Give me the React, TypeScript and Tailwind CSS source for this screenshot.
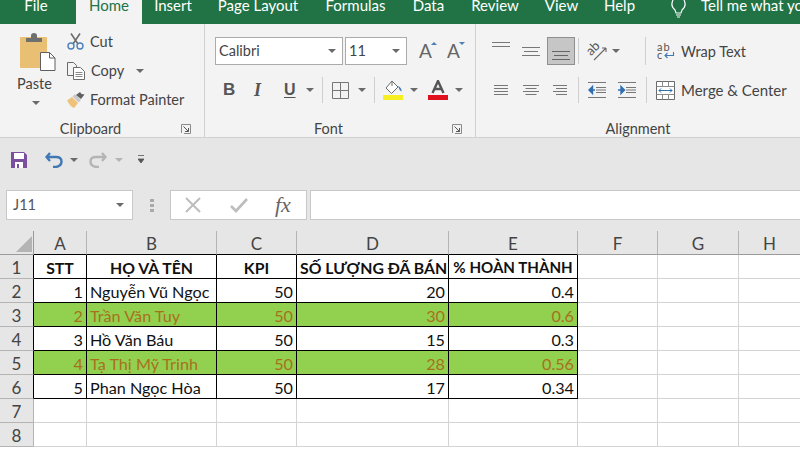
import React from 'react';

const tabs = [
  { name: 'File', w: 72 },
  { name: 'Home', w: 66 },
  { name: 'Insert', w: 62 },
  { name: 'Page Layout', w: 108 },
  { name: 'Formulas', w: 87 },
  { name: 'Data', w: 59 },
  { name: 'Review', w: 74 },
  { name: 'View', w: 59 },
  { name: 'Help', w: 57 },
];

const columns = ['A', 'B', 'C', 'D', 'E', 'F', 'G', 'H'];

// row data, hl = green highlighted row
const rows = [
  { cells: ['STT', 'HỌ VÀ TÊN', 'KPI', 'SỐ LƯỢNG ĐÃ BÁN', '% HOÀN THÀNH'], head: true },
  { cells: ['1', 'Nguyễn Vũ Ngọc', '50', '20', '0.4'] },
  { cells: ['2', 'Trần Văn Tuy', '50', '30', '0.6'], hl: true },
  { cells: ['3', 'Hồ Văn Báu', '50', '15', '0.3'] },
  { cells: ['4', 'Tạ Thị Mỹ Trinh', '50', '28', '0.56'], hl: true },
  { cells: ['5', 'Phan Ngọc Hòa', '50', '17', '0.34'] },
];

function Caret({ className = '' }: { className?: string }) {
  return (
    <svg width="8" height="4" viewBox="0 0 8 4" className={className}>
      <path d="M0 0h8L4 4z" fill="#6a6a6a" />
    </svg>
  );
}

function Sep({ className = '' }: { className?: string }) {
  return <div className={`w-px h-[26px] bg-[#cfcfcf] ${className}`} />;
}

function Launcher() {
  return (
    <svg width="10" height="10" viewBox="0 0 10 10">
      <path d="M.5 9V.5H9.5V9.5H3" fill="none" stroke="#8a8a8a" />
      <path d="M2.5 2.5L7.5 7.5M7.5 4v3.5H4" fill="none" stroke="#555" />
    </svg>
  );
}

function GroupLabel({ text, launcher = true }: { text: string; launcher?: boolean }) {
  return (
    <div className="flex items-center h-[20px] mt-auto mb-[-2px]">
      <div className="flex-1 text-center text-[#444]">{text}</div>
      {launcher && (
        <div className="w-[23px] flex">
          <Launcher />
        </div>
      )}
    </div>
  );
}

function Lines({ widths, gap = 3, color = '#777', align = 'center' }: { widths: number[]; gap?: number; color?: string; align?: string }) {
  const w = Math.max(...widths);
  return (
    <svg width={w} height={(widths.length - 1) * gap + 1}>
      {widths.map((l, i) => {
        const x = align === 'left' ? 0 : align === 'right' ? w - l : (w - l) / 2;
        return <rect key={i} x={x} y={i * gap} width={l} height="1" fill={color} />;
      })}
    </svg>
  );
}

function PasteIcon() {
  return (
    <svg width="37" height="38" viewBox="0 0 37 38">
      <rect x="0" y="4" width="27" height="31" rx="1" fill="#e9bf73" />
      <path d="M6 9V5h5V2.5Q11 0 14 0t3 2.5V5h5v4z" fill="#6f6f6f" />
      <path d="M20.5 19.5h9l5.5 5.5v12.5h-14.5z" fill="#fff" stroke="#5f5f5f" />
      <path d="M29.5 19.5V25H35" fill="none" stroke="#5f5f5f" />
    </svg>
  );
}

function CutIcon() {
  return (
    <svg width="17" height="17" viewBox="0 0 17 17">
      <path d="M4 0.5L11 11M13 0.5L6 11" fill="none" stroke="#6d6d6d" strokeWidth="1.6" />
      <circle cx="4" cy="13" r="3" fill="none" stroke="#4d82b8" strokeWidth="1.4" />
      <circle cx="13" cy="13" r="3" fill="none" stroke="#4d82b8" strokeWidth="1.4" />
    </svg>
  );
}

function CopyIcon() {
  return (
    <svg width="18" height="18" viewBox="0 0 18 18">
      <path d="M.5.5h6l3 3v10H.5z" fill="#f3f3f3" stroke="#6a6a6a" />
      <path d="M6.5 5.5h7l4 4v8h-11z" fill="#fff" stroke="#6a6a6a" />
      <path d="M8.5 10.5h7M8.5 12.5h7M8.5 14.5h7" stroke="#8a8a8a" />
    </svg>
  );
}

function PainterIcon() {
  return (
    <svg width="18" height="16" viewBox="0 0 18 16">
      <path d="M0 8.5L5 5l6 6-4 5q-3-.5-7-7.5z" fill="#efc27a" />
      <path d="M5.5 4.5L8 2l6 6-2.5 2.5z" fill="#c9c9c9" />
      <path d="M9 3l4-3 1.5 2 3 .5-3.5 4.5z" fill="#606060" />
    </svg>
  );
}

function BorderIcon() {
  return (
    <svg width="17" height="17" viewBox="0 0 17 17">
      <path d="M.5.5h16v16H.5zM8.5.5v16M.5 8.5h16" fill="none" stroke="#777" />
    </svg>
  );
}

function FillIcon() {
  return (
    <svg width="20" height="20" viewBox="0 0 20 20">
      <path d="M9 1L3 8l5.5 5.5L15 7z" fill="#fff" stroke="#6a6a6a" />
      <path d="M9 1v5" stroke="#6a6a6a" />
      <path d="M15 6q4 2 3.5 5.5-2-1-2.5-3z" fill="#3f78b5" />
      <rect x="0" y="15" width="20" height="5" fill="#f6ef22" />
    </svg>
  );
}

function FontColorIcon() {
  return (
    <svg width="20" height="20" viewBox="0 0 20 20">
      <path d="M4.5 13L10 1l5.5 12M6.5 9h7" fill="none" stroke="#555" strokeWidth="2.4" />
      <rect x="0" y="15" width="20" height="5" fill="#e0101c" />
    </svg>
  );
}

function GrowIcon({ up }: { up: boolean }) {
  return (
    <span className="relative flex text-[19px] leading-5 text-[#666]">
      A
      <svg width="6" height="3" viewBox="0 0 6 3" className="absolute -right-[5px] top-[1px]">
        <path d={up ? 'M0 3h6L3 0z' : 'M0 0h6L3 3z'} fill="#4b7fb5" />
      </svg>
    </span>
  );
}

function OrientIcon() {
  return (
    <svg width="20" height="20" viewBox="0 0 20 20">
      <path d="M7 19L19 7M19 7h-4M19 7v4" fill="none" stroke="#666" strokeWidth="1.1" />
      <text x="0" y="12" transform="rotate(-45 6 9)" fontSize="13" fontFamily="Lato, sans-serif" fill="#555">ab</text>
    </svg>
  );
}

function WrapIcon() {
  return (
    <svg width="18" height="17" viewBox="0 0 18 17">
      <text x="0" y="7.5" fontSize="11" fontFamily="Lato, sans-serif" fill="#555" letterSpacing="1">ab</text>
      <text x="0" y="16" fontSize="11" fontFamily="Lato, sans-serif" fill="#555">c</text>
      <path d="M16.5 9v3.5H8M10.5 10l-2.500 2.500 2.500 2.500" fill="none" stroke="#3f78b5" strokeWidth="1.100" />
    </svg>
  );
}

function IndentIcon({ out }: { out: boolean }) {
  return (
    <svg width="18" height="16" viewBox="0 0 18 16">
      <path d="M0 .5h18M8 5.5h10M8 8h10M8 10.5h10M0 15.5h18" stroke="#777" />
      {out ? (
        <path d="M7 8H2M4.5 4.5L1 8l3.5 3.5z" fill="#2f6fb0" stroke="#2f6fb0" strokeWidth="1.4" />
      ) : (
        <path d="M0 8h5M3 4.5L6.5 8 3 11.5z" fill="#2f6fb0" stroke="#2f6fb0" strokeWidth="1.4" />
      )}
    </svg>
  );
}

function MergeIcon() {
  return (
    <svg width="19" height="19" viewBox="0 0 19 19">
      <path d="M.5.5h18v18H.5z" fill="#fff" stroke="#6a6a6a" />
      <path d="M.5 5.5h18M.5 13.5h18M6.5.5v5M12.5.5v5M6.5 13.5v5M12.5 13.5v5" stroke="#8a8a8a" />
      <path d="M3 9.5h13M5 7.5l-2 2 2 2M14 7.5l2 2-2 2" fill="none" stroke="#2f6fb0" />
    </svg>
  );
}

function ClipboardGroup() {
  return (
    <div className="w-[205px] h-full flex flex-col border-r border-[#d0d0d0] shrink-0">
      <div className="flex pt-[9px]">
        <div className="w-[67px] flex flex-col items-center pl-[5px]">
          <div className="ml-[5px]">
            <PasteIcon />
          </div>
          <div className="mt-[3px] leading-5 text-[#444] pr-[3px]">Paste</div>
          <Caret className="mt-[7px]" />
        </div>
        <div className="flex flex-col">
          <div className="h-[17px] flex items-center">
            <CutIcon />
            <span className="ml-[6px] text-[#444]">Cut</span>
          </div>
          <div className="h-[18px] mt-[12px] flex items-center">
            <CopyIcon />
            <span className="ml-[6px] text-[#444]">Copy</span>
            <Caret className="ml-[12px]" />
          </div>
          <div className="h-[18px] mt-[11px] flex items-center">
            <PainterIcon />
            <span className="ml-[5px] text-[#444]">Format Painter</span>
          </div>
        </div>
      </div>
      <GroupLabel text="Clipboard" />
    </div>
  );
}

function FontGroup() {
  return (
    <div className="w-[271px] h-full flex flex-col border-r border-[#d0d0d0] shrink-0">
      <div className="flex items-center pt-[13px] pl-[10px]">
        <div className="w-[128px] h-[28px] bg-white border border-[#ababab] flex items-center justify-between pl-[3px] pr-[6px] text-[#444]">
          Calibri
          <Caret />
        </div>
        <div className="w-[62px] h-[28px] ml-[2px] bg-white border border-[#ababab] flex items-center justify-between pl-[3px] pr-[6px] text-[#444]">
          11
          <Caret />
        </div>
        <div className="ml-[12px]">
          <GrowIcon up />
        </div>
        <div className="ml-[15px]">
          <GrowIcon up={false} />
        </div>
      </div>
      <div className="flex items-center mt-[12px] h-[26px] pl-[18px] text-[#555]">
        <span className="w-[13px] font-['Liberation_Sans',sans-serif] font-bold text-[17px]">B</span>
        <span className="w-[13px] ml-[18px] font-['Liberation_Serif',serif] font-bold italic text-[18px]">I</span>
        <span className="ml-[17px] font-['Liberation_Sans',sans-serif] font-bold text-[16px] underline underline-offset-2">U</span>
        <Caret className="ml-[10px]" />
        <Sep className="ml-[8px]" />
        <div className="ml-[9px]">
          <BorderIcon />
        </div>
        <Caret className="ml-[9px]" />
        <Sep className="ml-[8px]" />
        <div className="ml-[8px]">
          <FillIcon />
        </div>
        <Caret className="ml-[7px]" />
        <div className="ml-[10px]">
          <FontColorIcon />
        </div>
        <Caret className="ml-[7px]" />
      </div>
      <GroupLabel text="Font" />
    </div>
  );
}

function AlignmentGroup() {
  return (
    <div className="flex-1 h-full flex flex-col">
      <div className="flex items-center pt-[13px] h-[41px]">
        <div className="ml-[16px] mb-[13px]">
          <Lines widths={[18, 18]} gap={4} />
        </div>
        <div className="ml-[12px]">
          <Lines widths={[18, 14, 18]} gap={4} />
        </div>
        <div className="ml-[7px] w-[28px] h-[28px] bg-[#c6c6c6] border border-[#8f8f8f] flex items-end justify-center pb-[4px]">
          <Lines widths={[18, 14, 18]} gap={4} color="#666" />
        </div>
        <Sep className="ml-[3px]" />
        <div className="ml-[8px]">
          <OrientIcon />
        </div>
        <Caret className="ml-[5px]" />
        <Sep className="ml-[25px] h-[28px]" />
        <div className="ml-[11px] mt-[1px]">
          <WrapIcon />
        </div>
        <span className="ml-[6px] mt-[2px] text-[#444]">Wrap Text</span>
      </div>
      <div className="flex items-center mt-[12px] h-[26px]">
        <div className="ml-[18px]">
          <Lines widths={[14, 14, 14, 14]} gap={3} align="left" />
        </div>
        <div className="ml-[15px]">
          <Lines widths={[16, 11, 16, 11]} gap={3} />
        </div>
        <div className="ml-[14px]">
          <Lines widths={[14, 11, 14, 11]} gap={3} align="right" />
        </div>
        <Sep className="ml-[11px]" />
        <div className="ml-[9px]">
          <IndentIcon out />
        </div>
        <div className="ml-[12px]">
          <IndentIcon out={false} />
        </div>
        <Sep className="ml-[10px]" />
        <div className="ml-[9px]">
          <MergeIcon />
        </div>
        <span className="ml-[6px] text-[15px] text-[#444]">Merge &amp; Center</span>
      </div>
      <GroupLabel text="Alignment" launcher={false} />
    </div>
  );
}

function QuickAccess() {
  return (
    <div className="h-[42px] flex items-center bg-[#e6e6e6] pl-[11px] pt-[1px]">
      <svg width="16" height="16" viewBox="0 0 16 16">
        <path d="M0 0h13l3 3v13H0z" fill="#7a4f9f" />
        <rect x="3" y="1" width="10" height="6" fill="#fff" />
        <rect x="4" y="10" width="8" height="6" fill="#fff" />
        <rect x="6" y="12" width="2" height="4" fill="#7a4f9f" />
      </svg>
      <svg width="18" height="16" viewBox="0 0 18 16" className="ml-[18px]">
        <path d="M5 1L1.5 5 5 9M2 5h9q5.5 0 5.5 4.5T11 15H8" fill="none" stroke="#3f78b5" strokeWidth="2.4" />
      </svg>
      <Caret className="ml-[7px]" />
      <svg width="18" height="16" viewBox="0 0 18 16" className="ml-[11px]">
        <path d="M13 1l3.5 4L13 9M16 5H7Q1.5 5 1.5 9.5T7 15h3" fill="none" stroke="#b4b4b4" strokeWidth="2.4" />
      </svg>
      <Caret className="ml-[8px] opacity-40" />
      <svg width="6" height="9" viewBox="0 0 6 9" className="ml-[15px]">
        <path d="M0 .5h6M0 4h6L3 8z" fill="#555" stroke="#555" strokeWidth=".8" />
      </svg>
    </div>
  );
}

function FormulaBar() {
  return (
    <div className="h-[51px] bg-[#e6e6e6] flex pl-[6px] pt-[10px] pb-[11px]">
      <div className="w-[127px] bg-white border border-[#c8c8c8] flex items-center justify-between pl-[6px] pr-[8px] text-[#555]">
        J11
        <Caret />
      </div>
      <div className="w-[37px] flex flex-col items-center justify-center gap-[2px]">
        <div className="w-[4px] h-[3px] bg-[#aaa]" />
        <div className="w-[4px] h-[3px] bg-[#aaa]" />
        <div className="w-[4px] h-[3px] bg-[#aaa]" />
      </div>
      <div className="w-[137px] bg-white border border-[#c8c8c8] flex items-center pl-[14px]">
        <svg width="16" height="16" viewBox="0 0 16 16">
          <path d="M1 1l14 14M15 1L1 15" stroke="#bdbdbd" strokeWidth="2" />
        </svg>
        <svg width="18" height="15" viewBox="0 0 18 15" className="ml-[29px]">
          <path d="M1 8l5 5L17 1" fill="none" stroke="#bdbdbd" strokeWidth="2.6" />
        </svg>
        <span className="ml-[27px] font-['Liberation_Serif',serif] italic text-[22px] leading-6 text-[#666]">fx</span>
      </div>
      <div className="flex-1 ml-[3px] bg-white border-y border-l border-[#c8c8c8]" />
    </div>
  );
}

function Sheet() {
  const grid = 'grid grid-cols-[34px_53px_130px_80px_152px_129px_80px_81px_62px] auto-rows-[24px]';
  return (
    <div className={`${grid} text-[#111] text-[16.2px] leading-[25px]`}>
      <div className="h-[24px] bg-[#e6e6e6] border-r border-b border-[#9a9a9a] flex items-end justify-end pr-[1px] pb-[2px]">
        <svg width="16" height="16" viewBox="0 0 16 16">
          <path d="M16 0v16H0z" fill="#b4b4b4" />
        </svg>
      </div>
      {columns.map((c, i) => (
        <div
          key={c}
          className={`bg-[#e6e6e6] text-[#444] text-center text-[17px] border-r border-[#b4b4b4] border-b ${i < 5 ? 'border-b-black' : 'border-b-[#9a9a9a]'}`}
        >
          {c}
        </div>
      ))}
      {rows.map((r, i) => (
        <React.Fragment key={i}>
          <div className="bg-[#e6e6e6] text-[#444] text-center text-[17px] border-r border-b border-r-black border-b-[#b4b4b4]">{i + 1}</div>
          {r.cells.map((v, j) => {
            const numeric = !r.head && j !== 1;
            return (
              <div
                key={j}
                className={`border-r border-b border-black px-[3px] whitespace-nowrap overflow-hidden ${r.head ? `font-bold text-center px-[1px] ${j === 4 ? 'text-[15.1px]' : 'text-[15.8px]'}` : ''} ${numeric ? 'text-right' : ''} ${r.hl ? 'bg-[#92d050] text-[#a8701c]' : ''}`}
              >
                {v}
              </div>
            );
          })}
          <div className="border-r border-b border-[#d4d4d4]" />
          <div className="border-r border-b border-[#d4d4d4]" />
          <div className="border-r border-b border-[#d4d4d4]" />
        </React.Fragment>
      ))}
      {[7, 8].map((n) => (
        <React.Fragment key={n}>
          <div className="bg-[#e6e6e6] text-[#444] text-center text-[17px] border-r border-b border-[#b4b4b4]">{n}</div>
          {columns.map((c) => (
            <div key={c} className="border-r border-b border-[#d4d4d4]" />
          ))}
        </React.Fragment>
      ))}
    </div>
  );
}

export default function App() {
  return (
    <div className="w-[800px] h-[450px] overflow-hidden bg-white font-['Lato',sans-serif] text-[14.5px]">
      {/* Title tabs */}
      <div className="h-[24px] bg-[#217346] flex overflow-hidden text-white text-[15px]">
        {tabs.map((t) => (
          <div
            key={t.name}
            style={{ width: t.w }}
            className={`h-[24px] flex items-end justify-center pb-[9px] leading-5 shrink-0 ${t.name === 'Home' ? 'bg-[#f3f3f3] text-[#217346] ml-[4px]' : ''}`}
          >
            {t.name}
          </div>
        ))}
        <svg width="18" height="24" viewBox="0 0 18 24" className="ml-[21px] shrink-0">
          <path d="M4 0q-3 6 2 10l1 3h5l1-3q5-4 2-10M7 15h5M8 17h3" fill="none" stroke="#fff" strokeWidth="1.2" />
        </svg>
        <div className="ml-[14px] whitespace-nowrap h-[24px] flex items-end pb-[9px] leading-5">Tell me what you want to do</div>
      </div>

      {/* Ribbon */}
      <div className="h-[114px] flex bg-[#f3f3f3] border-b border-[#d0d0d0]">
        <ClipboardGroup />
        <FontGroup />
        <AlignmentGroup />
      </div>

      <QuickAccess />
      <FormulaBar />
      <Sheet />
    </div>
  );
}
